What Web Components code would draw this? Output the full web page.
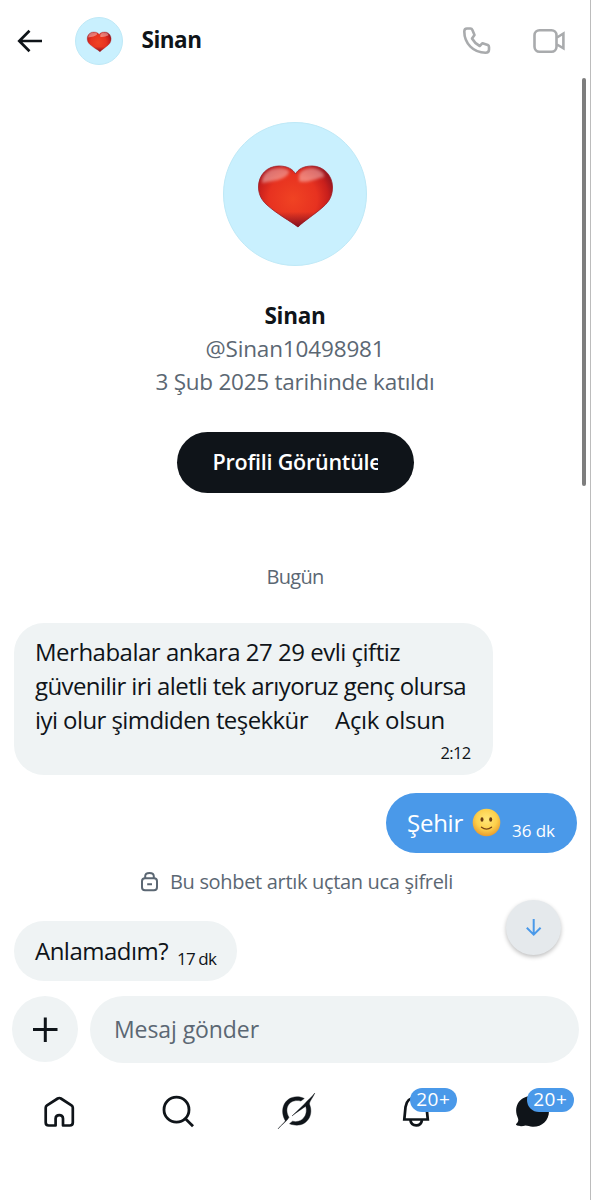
<!DOCTYPE html>
<html lang="tr">
<head>
<meta charset="utf-8">
<title>Sinan</title>
<style>
html,body{margin:0;padding:0;background:#fff}
body{width:591px;height:1200px;overflow:hidden;font-family:"Open Sans","Noto Sans",sans-serif;color:#0f1419}
</style>
</head>
<body>
<chat-screen></chat-screen>

<script>
const part = (name, html) => customElements.define(name, class extends HTMLElement {
  connectedCallback() {
    if (this.shadowRoot) return;
    const t = document.createElement('template');
    t.innerHTML = html;
    this.attachShadow({mode: 'open'}).append(t.content.cloneNode(true));
  }
});

part('heart-avatar', `
<style>
:host{display:block;box-sizing:border-box;border-radius:50%;background:#c9f0fe;border:1px solid #bfe9f7;flex:none}
svg{display:block;width:100%;height:100%}
</style>
<svg viewBox="224 123 142 142">
<defs>
<radialGradient id="r" gradientUnits="userSpaceOnUse" cx="293" cy="199" r="44">
<stop offset="0" stop-color="#f04323"/><stop offset=".55" stop-color="#e73220"/><stop offset=".8" stop-color="#c81f1c"/><stop offset="1" stop-color="#8d1320"/></radialGradient>
<linearGradient id="d" x1="0" y1="0" x2="0" y2="1"><stop offset=".75" stop-color="#6c0a20" stop-opacity="0"/><stop offset="1" stop-color="#6c0a20" stop-opacity=".8"/></linearGradient>
<linearGradient id="w" x1="0" y1="0" x2="0" y2="1"><stop offset="0" stop-color="#fff" stop-opacity=".35"/><stop offset="1" stop-color="#fff" stop-opacity=".4"/></linearGradient>
<filter id="b" x="-20%" y="-30%" width="140%" height="160%"><feGaussianBlur stdDeviation="1.5"/></filter>
</defs>
<path d="M298 227C290 221 277 214 267 205C260 199 258.500 192 258.500 187C258.500 175 267 166 279 166C287 166 293 169 295.500 174C298 169 304 166 312 166C324 166 332.500 176 332.500 187C332.500 195 330 201 323 207C314 215 304 221 298 227Z" fill="url(#r)" stroke="#9d1c24" stroke-width=".8"/>
<path d="M298 227C290 221 277 214 267 205C260 199 258.500 192 258.500 187C258.500 175 267 166 279 166C287 166 293 169 295.500 174C298 169 304 166 312 166C324 166 332.500 176 332.500 187C332.500 195 330 201 323 207C314 215 304 221 298 227Z" fill="url(#d)"/>
<g fill="url(#w)" filter="url(#b)"><path d="M262 183C262 172 271 168 279 168C285 168 290 170 289 173C285 180 272 181 262 183Z"/><path d="M299 175C301 169 308 168 313 168C320 169 325 173 324 177C318 178 306 184 299 181Z"/></g>
</svg>`);

part('chat-header', `
<style>
:host{display:flex;height:82px;align-items:center;box-sizing:border-box;padding:0 25px 1px 17px;flex:none}
svg{display:block;flex:none}
heart-avatar{width:48px;height:48px;margin-left:32px}
.n{margin-left:18.500px;font-size:22.500px;font-weight:700;line-height:30px;flex:1;margin-top:-1px}
.v{margin-left:42px}
</style>
<svg width="26" height="26" viewBox="17 28 26 26" fill="none" stroke="#0f1419" stroke-width="2.7"><path d="M42 41H20M29.500 30.800L19.300 41L29.500 51.200"/></svg>
<heart-avatar></heart-avatar>
<div class="n"><fit-line w="60">Sinan</fit-line></div>
<svg width="29" height="29" viewBox="462 26 29 29" fill="none" stroke="#a9abad" stroke-width="2.6" stroke-linejoin="round"><path d="M467 28.500H470.500C471.500 28.500 472 29 472.400 30L474.500 35L472 38.500C474 42 476.500 44.300 479.700 46L482.500 43.200L487.800 45C488.700 45.400 489 46 489 47V49.500C489 51.500 487.500 52.700 485.500 52.700C473.500 52.700 464.300 43.500 464.300 31.500C464.300 29.700 465.300 28.500 467 28.500Z"/></svg>
<svg class="v" width="33" height="26" viewBox="533 28 33 26" fill="none" stroke="#a9abad" stroke-width="2.6"><rect x="534.500" y="30.300" width="22" height="21.500" rx="5"/><path d="M557 37.500L563.400 33.500V48.300L557 44.500"/></svg>`);

part('profile-card', `
<style>
:host{display:flex;flex-direction:column;align-items:center;height:411px;width:590px;box-sizing:border-box;padding-top:40px;flex:none}
heart-avatar{width:144px;height:144px;margin-bottom:32.500px}
.l{font-size:22.500px;line-height:33px;color:#5b6773}
.b{font-size:22.500px;font-weight:700;color:#0f1419}
button{appearance:none;border:0;font-family:inherit;margin:34px 0 0;width:237px;height:61px;border-radius:31px;background:#0f1419;color:#fff;font-size:21.500px;font-weight:600;padding:0 0 0 36px;text-align:left;line-height:32px}
.c{display:block;width:165px;overflow:hidden;white-space:nowrap}
</style>
<heart-avatar></heart-avatar>
<div class="l b"><fit-line w="61">Sinan</fit-line></div>
<div class="l"><fit-line w="179">@Sinan10498981</fit-line></div>
<div class="l"><fit-line w="279">3 Şub 2025 tarihinde katıldı</fit-line></div>
<button><span class="c"><fit-line w="169">Profili Görüntüle</fit-line></span></button>`);

part('message-bubble', `
<style>
:host{display:flex;box-sizing:border-box;height:60px;border-radius:30px;background:#eff3f4;color:#0f1419;font-size:24px;line-height:34px;padding:13px 21px 0;white-space:nowrap;flex:none;align-items:flex-start}
:host([own]){background:#4a99e9;color:#fff;align-self:flex-end}
:host([tall]){height:152px;flex-direction:column;padding-top:12px}
.t{display:flex;flex-direction:column}
.s{font-size:17px;line-height:24px;margin:12.500px 0 0 9px}
:host([own]) .s{margin:12.500px 0 0 11.500px}
:host([tall]) .s{font-size:16.500px;margin:4px 1.500px 0 0;align-self:flex-end}
</style>
<div class="t"><slot></slot></div><div class="s"><slot name="time"></slot></div>`);

part('smile-icon', `
<style>:host{display:inline-block;width:29px;height:29px;vertical-align:-5px;margin-left:8.500px}svg{display:block}</style>
<svg width="29" height="29" viewBox="0 0 29 29"><defs><radialGradient id="g" cx=".5" cy=".38" r=".62"><stop offset="0" stop-color="#ffe77a"/><stop offset=".6" stop-color="#fdd04b"/><stop offset="1" stop-color="#e99b2d"/></radialGradient></defs>
<circle cx="14.500" cy="14.500" r="13.800" fill="url(#g)"/><ellipse cx="10" cy="11.500" rx="1.500" ry="2.300" fill="#6a3b12"/><ellipse cx="18.700" cy="11.500" rx="1.500" ry="2.300" fill="#6a3b12"/><path d="M9.500 19.200Q14.500 23 19.500 19.200" fill="none" stroke="#7b4516" stroke-width="1.400" stroke-linecap="round"/></svg>`);

part('day-label', `
<style>:host{display:block;width:590px;height:28px;margin-top:70px;text-align:center;font-size:20px;line-height:28px;color:#5b6773;flex:none}</style><slot></slot>`);

part('encryption-note', `
<style>:host{display:flex;height:28px;align-items:center;margin:15px 0 25px 140px;font-size:20px;line-height:28px;color:#5b6773;gap:10px;flex:none}svg{display:block}</style>
<svg width="20" height="22" viewBox="140 871 20 22" fill="none" stroke="#5b6773" stroke-width="2"><rect x="142" y="878.300" width="15" height="12" rx="3"/><path d="M145.200 878.300V876.300C145.200 871.900 153.800 871.900 153.800 876.300V878.300M147.200 884.200H152"/></svg>
<slot></slot>`);

part('scroll-down', `
<style>:host{display:block;position:absolute;left:506px;top:900px;width:55px;height:55px;border-radius:50%;background:#e5e9ec;box-shadow:0 2px 4px rgba(0,0,0,.25)}svg{display:block}</style>
<svg width="55" height="55" viewBox="0 0 55 55" fill="none" stroke="#4a99e9" stroke-width="2"><path d="M27.700 19V34.500M20.800 27.800L27.700 34.700L34.600 27.800"/></svg>`);

part('message-composer', `
<style>
:host{display:flex;gap:12px;margin:15px 12px 0;height:67px;flex:none}
.p{width:66px;height:66px;border-radius:50%;background:#eff3f4;flex:none}
.f{flex:1;border-radius:34px;background:#eff3f4;color:#5b6773;font-size:23px;line-height:66px;padding-left:24px}
svg{display:block}
</style>
<div class="p"><svg width="66" height="66" viewBox="0 0 66 66" stroke="#0f1419" stroke-width="3"><path d="M21 33.500H45.500M33.300 21.500V46"/></svg></div>
<div class="f"><fit-line w="145">Mesaj gönder</fit-line></div>`);

part('nav-badge', `
<style>:host{display:block;position:absolute;top:10px;width:46.500px;height:24px;border-radius:12px;background:#4a99e9;color:#fff;font-size:19px;line-height:23px;text-align:center}</style><slot></slot>`);

part('bottom-nav', `
<style>
:host{display:grid;grid-template-columns:repeat(5,118.500px);margin-top:15px;height:66px;width:592px;flex:none}
.i{position:relative}
svg{display:block;width:118.500px;height:66px}
</style>
<div class="i"><svg viewBox="0 1078 118.500 66" fill="none" stroke="#0f1419" stroke-width="2.700" stroke-linejoin="round"><path d="M57.700 1098.500Q59.300 1097.500 60.900 1098.500L71.500 1105.300Q72.800 1106.200 72.800 1107.800V1122.500Q72.800 1125.500 69.800 1125.500H63V1118.500C63 1113.900 55.600 1113.900 55.600 1118.500V1125.500H48.700Q45.700 1125.500 45.700 1122.500V1107.800Q45.700 1106.200 47 1105.300Z"/></svg></div>
<div class="i"><svg viewBox="118.500 1078 118.500 66" fill="none" stroke="#0f1419" stroke-width="2.800"><circle cx="176" cy="1109.700" r="12.500"/><path d="M184.700 1118.500L192.500 1126.200"/></svg></div>
<div class="i"><svg viewBox="237 1078 118.500 66" fill="#0f1419" stroke="#0f1419" stroke-width=".4"><path d="M284.900 1119.900C279.500 1110 284 1097 297 1096.800C300 1096.800 302 1097.400 304.300 1098.500L300.900 1101C289.500 1098.300 283.500 1108 289 1117.300C287 1121.500 281.500 1124.500 278 1129C281.500 1124.500 286.500 1121 284.900 1119.900Z"/><path d="M292 1116L304.700 1103.800C307 1100.500 312 1097 314.800 1093C312.500 1098.500 309 1101.500 309.600 1104.500C314.500 1117 304.500 1129.500 289.500 1123.700L292.500 1121.200C301.500 1123.600 308.500 1115.500 305.800 1106.200C302 1109 296 1112.500 292 1116Z"/></svg></div>
<div class="i"><svg viewBox="355.500 1078 118.500 66" fill="none" stroke="#0f1419" stroke-width="2.700"><path d="M403.800 1119.500L405 1107C406 1100 410 1097.500 415.500 1097.500C421 1097.500 425 1100 426 1107L427.300 1119.500Z"/><path d="M409.800 1120C411 1127.200 420.500 1127.200 421.500 1120"/></svg><nav-badge style="left:54.500px"><fit-line w="34">20+</fit-line></nav-badge></div>
<div class="i"><svg viewBox="474 1078 118.500 66"><path d="M516.300 1123.800C519 1121.500 518.500 1119.500 517.500 1117C513 1105 521 1095.800 532.500 1095.800C542 1095.800 549 1102 549 1111C549 1121 541.500 1127.200 532.500 1126.800C530 1126.700 527.500 1125.500 525.500 1125.500C522.500 1126.500 518.500 1126.500 516.300 1125C515.800 1124.600 515.800 1124.200 516.300 1123.800Z" fill="#0f1419"/></svg><nav-badge style="left:53px"><fit-line w="34">20+</fit-line></nav-badge></div>`);

part('chat-screen', `
<style>
:host{display:flex;flex-direction:column;position:relative;box-sizing:border-box;width:591px;height:1200px;background:#fff;overflow:hidden}
.m{display:flex;flex-direction:column;align-items:flex-start;padding:0 14px;flex:none}
.bar{position:absolute;left:582px;top:78px;width:4px;height:408px;border-radius:2px;background:#7e7e7e}
.edge{position:absolute;right:0;top:0;width:1px;height:100%;background:#bcbcbc}
.gap{display:flex;gap:27px}
</style>
<chat-header></chat-header>
<profile-card></profile-card>
<day-label><fit-line w="57">Bugün</fit-line></day-label>
<div class="m" style="margin-top:31.500px">
<message-bubble tall style="width:479px"><fit-line w="365">Merhabalar ankara 27 29 evli çiftiz</fit-line><fit-line w="431">güvenilir iri aletli tek arıyoruz genç olursa</fit-line><div class="gap"><fit-line w="273">iyi olur şimdiden teşekkür</fit-line><fit-line w="110">Açık olsun</fit-line></div><fit-line slot="time" w="30">2:12</fit-line></message-bubble>
<message-bubble own style="width:191px;margin-top:18.500px"><div><fit-line w="56">Şehir</fit-line><smile-icon></smile-icon></div><fit-line slot="time" w="43">36 dk</fit-line></message-bubble>
</div>
<encryption-note><fit-line w="283">Bu sohbet artık uçtan uca şifreli</fit-line></encryption-note>
<div class="m"><message-bubble style="width:223px"><fit-line w="133">Anlamadım?</fit-line><fit-line slot="time" w="39">17 dk</fit-line></message-bubble></div>
<message-composer></message-composer>
<bottom-nav></bottom-nav>
<scroll-down></scroll-down>
<div class="bar"></div><div class="edge"></div>`);

/* One line of text, tracked so that it fills the width given in "w". */
customElements.define('fit-line', class extends HTMLElement {
  connectedCallback() {
    if (this.shadowRoot) return;
    this.attachShadow({mode: 'open'}).innerHTML = '<style>:host{display:inline-block;white-space:nowrap;vertical-align:top;width:max-content}</style><slot></slot>';
    const natural = this.getBoundingClientRect().width;
    const n = [...this.textContent].length;
    this.style.letterSpacing = ((+this.getAttribute('w') - natural) / n).toFixed(3) + 'px';
  }
});
</script>
</body>
</html>
